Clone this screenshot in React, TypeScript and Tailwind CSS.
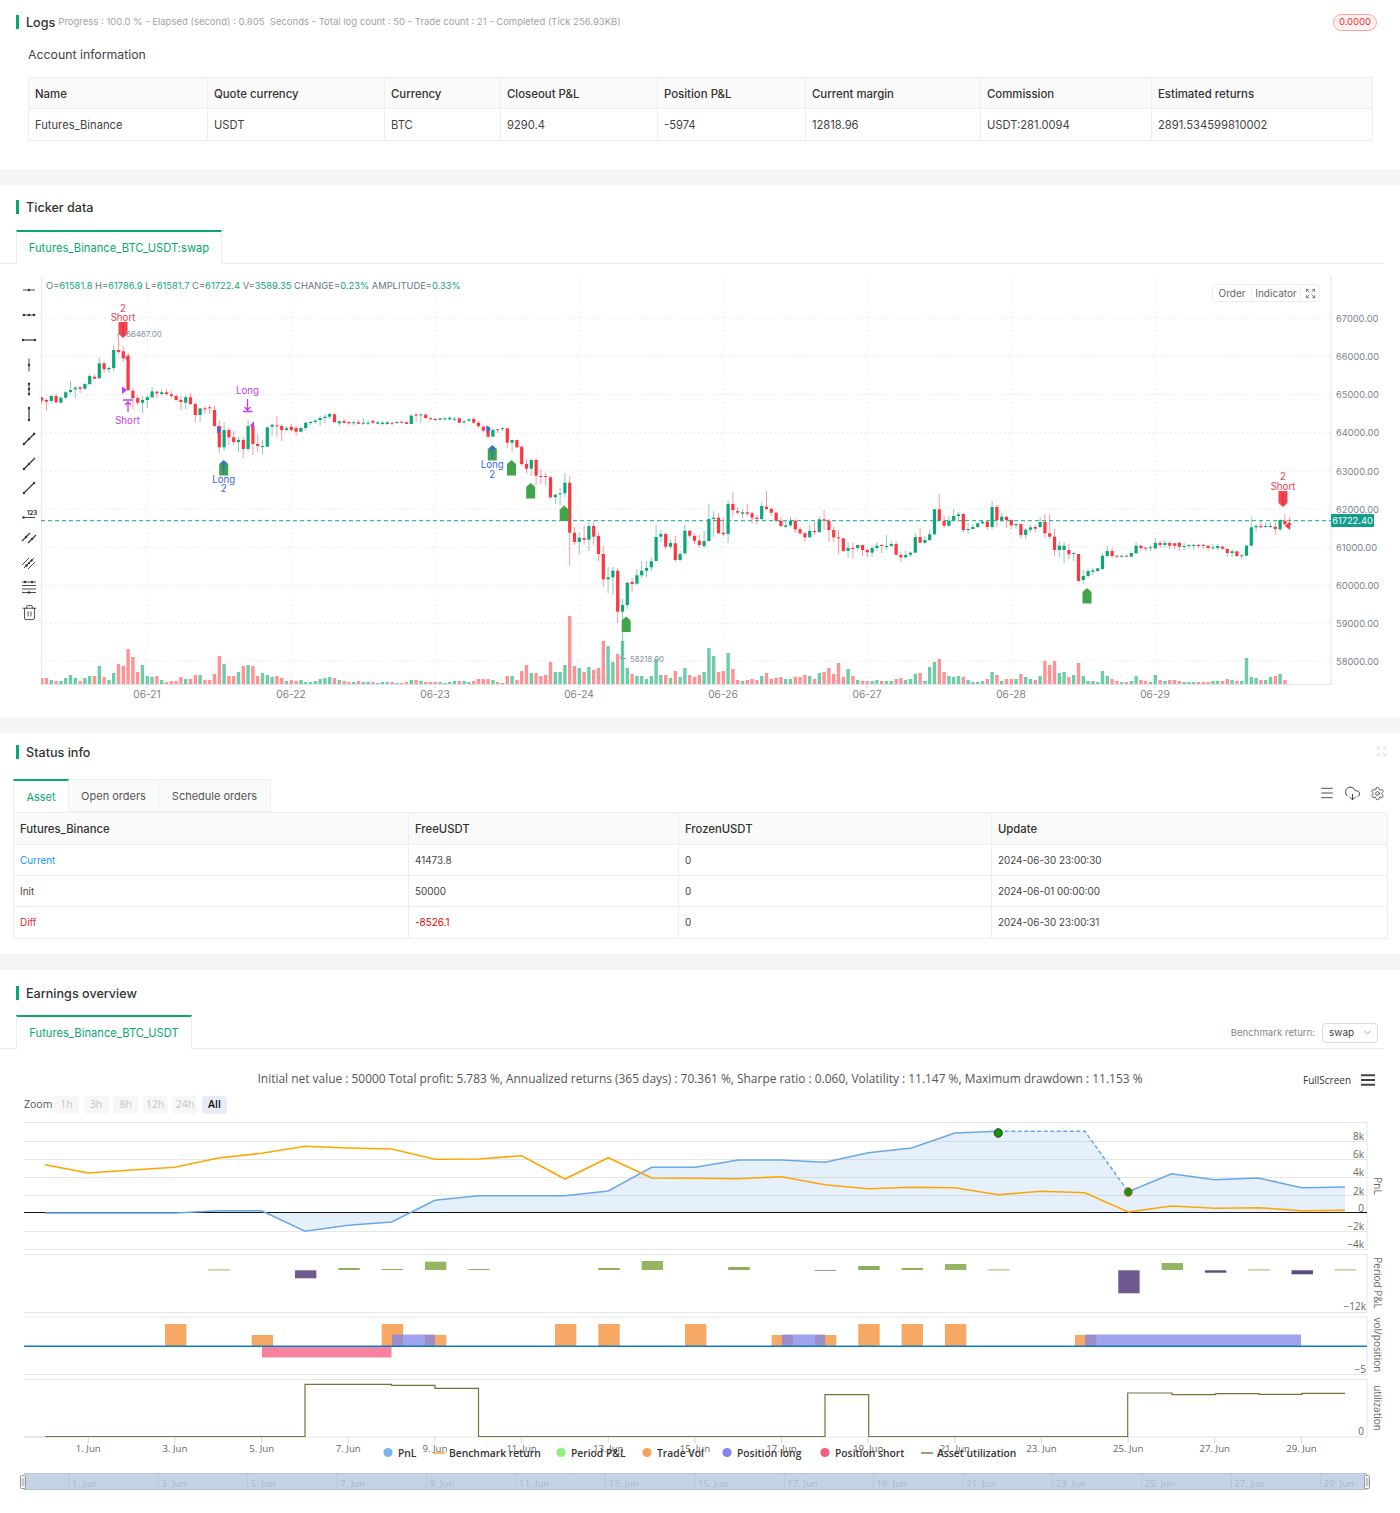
import { CloudDownload, ChevronDown, Expand, Menu, Settings, Trash2 } from "lucide-react";

type Candle = { top: number; bot: number; hi: number; lo: number; up: boolean };

const g = (top: number, bot: number, hi: number, lo: number): Candle => ({ top, bot, hi, lo, up: true });
const r = (top: number, bot: number, hi: number, lo: number): Candle => ({ top, bot, hi, lo, up: false });

// page-pixel coordinates read off the chart, one candle every 4.8px
const candles: Candle[] = [
  r(397.3,400.7,397,404), r(400,401.7,398,410.7), g(396,401,395,403), r(396,402.3,394,404), g(397.7,402.7,396,404), g(392.3,397.7,391,399), g(390,392,381,394), g(387.7,389.3,386,398),
  r(387.3,388.7,386,393), g(384,388.7,383,390), g(376,384,374,385), r(376.7,378.7,375,379), g(363.3,378.3,358,379), r(363.3,369.3,361,373), g(368,369.3,366,373), g(350,368,345,371),
  r(350,352,337,354), r(351.3,358.3,346,362), r(356,390,353,391), r(390.7,398,388,409), r(398,402.7,395,405), g(400,402.7,396,413), g(397.3,400,395,408), g(391.3,397.3,387,398),
  r(391.7,393.3,391,398), g(392.3,394,389,395), r(392.3,394,389,396), r(394.3,396,391,398), r(396,400,394,401), r(400,402,396,410), g(397.3,402.7,395,409), r(397.3,404,393,405),
  r(404,415,402,422), g(408.3,415,408,422), r(408.3,409,406,414), r(407.3,408.3,405,414), r(410,426,406,427), r(426,447.3,420,453), g(430,447.3,422,451), r(430,437.3,427,445),
  r(437.3,442,431,445), g(440,442,437,452), r(440,449,437,458), g(426,449,420,451), r(426,444,422,455), r(444,446,435,452), g(446,446.7,440,454), g(427.3,446.7,427,447),
  g(424.7,426.7,424,436), r(425.3,426,416,437), r(426,430,424,441), g(428.3,430,426,431), r(426.7,430,424,432), r(428,431.7,426,436), g(428,431.7,427,432), g(422.7,428,422,431),
  g(422,422.7,421,425), g(420.7,422,419,424), g(418,420,416,426), g(416.7,418,414,423), g(414,416.7,413,419), r(414.3,422.3,413,423), g(421.3,423.3,420,426), r(421,422.7,419,424),
  r(422,423.3,421,425), g(422.3,423.3,421,425), r(422.3,423.7,420,424), g(422.7,423.7,418,425), g(422.7,423.7,420,425), r(421,422.7,420,424), g(422.3,423.7,421,424), g(422.7,424,421,425),
  g(422.3,424,421,425), r(422.7,423.7,422,425), g(422,423,421,424), r(421.7,422.7,421,424), r(422.3,424,421,424), g(415.7,424,414,424), r(414.7,415.3,413,422), g(414.3,415.3,414,423),
  r(414.7,418,413,419), r(418.3,419.3,417,420), r(419,420,418,421), g(418.3,419.7,418,420), g(418.3,419.3,417,421), g(417.7,419.3,416,420), g(418.7,419.7,417,421), r(418.3,422.7,417,423),
  g(421.3,422.3,420,425), g(419.3,420.7,418,422), r(419,422.7,417,424), r(422.7,426,421,428), r(426.7,430.7,425,432), r(426.7,436.7,427,438), g(430,436.7,428,437), r(429.3,430,429,433),
  g(428.3,429.3,427,431), r(428.3,442.7,428,448), g(440,442.7,440,452), r(440,447.3,440,448), r(446.7,464,446,466), r(464,468.7,459,473), g(460,468.7,459,476), r(460,475.7,458,485),
  r(476,476.7,469,484), r(476,477,473,485), r(477.3,497.3,476,499), g(494.7,497.3,494,504), g(493.3,494,488,505), g(482.7,493.3,473,497), r(482.7,532.7,476,566), r(532.7,542,527,545),
  g(537.7,542,532,554), r(538,539.7,526,545), g(526,539.7,522,551), r(526,536.7,521,545), r(536,554,532,561), r(554,579.3,546,587), g(577.3,579.3,567,593), g(570.7,577.3,567,595),
  r(570.7,611.7,568,623), g(605,611.7,599,656), g(582.7,605,582,609), r(582,584,578,592), g(575.3,583.7,569,585), g(570.7,575.3,561,578), g(568,570.7,561,577), g(561.3,567.3,557,571),
  g(537,561,525,561), g(534,536.7,530,542), r(534,546.7,532,550), g(543,546.7,540,549), r(543.3,560,536,562), g(554,560,551,561), g(530.7,553.3,525,554), r(530.7,535.7,530,538),
  r(536,540.7,533,544), r(540.7,545,535,547), g(541,546,531,548), g(519,541,504,541), g(517.7,519,511,537), r(517.7,533.3,513,534), r(532.7,534.3,517,536), g(504,534,500,543),
  r(504,510,492,517), r(511,512.7,507,514), g(512.3,513.7,509,518), r(512.3,513.7,504,516), r(513.3,517.7,512,523), r(517.7,519,515,524), g(506,519,502,520), r(506.7,509,491,510),
  r(509,512.7,507,516), r(512.7,520.7,512,522), r(520.7,526,517,527), g(525.3,526.7,521,528), g(520.7,525.3,517,527), r(520.7,529.3,519,533), r(529.3,533.3,527,535), r(533.3,537.3,532,542),
  g(531,537.3,525,538), r(531,531.7,522,535), g(519.3,532,517,533), r(519.3,520.7,510,530), r(520.7,530,519,542), r(530,537.3,527,542), r(537.3,538.3,530,554), r(538.3,551,538,552),
  g(548,551,542,558), r(548,548.7,542,559), g(545,548,545,551), r(545,550,545,556), r(550,552.3,548,557), g(548,552.7,546,557), g(545.7,548,542,551), r(545,545.7,544,553),
  g(546,546.7,535,550), g(544,546,541,547), r(544,554.7,541,555), r(555,557.3,552,562), g(555,557.3,551,558), g(552.7,554.7,552,557), g(537,552.7,533,553), r(537,542.7,528,543),
  g(540,542.7,536,544), g(534.3,540,530,541), g(509.3,534.3,509,535), r(509.3,520.7,494,521), r(520.7,525.7,515,528), g(520.7,525.7,516,527), g(516,520.7,509,521), g(514.3,516,512,521),
  r(514,530,513,532), g(529,530,523,534), g(527,529,524,529), g(523.3,527,523,528), g(521.7,523.3,520,524), r(521.7,527,520,530), g(507,527,501,529), r(507,520.3,505,527),
  g(516.7,520.3,513,522), r(516.7,520,516,528), r(520,525.3,519,529), g(524,525.3,523,529), r(524,535,524,539), g(529.7,535,528,539), g(527.3,529.7,525,532), r(527,528.7,525,532),
  g(522,527,517,528), r(522,533.3,514,538), r(533.3,536.7,514,539), r(536.7,550,529,556), g(545.7,550,541,557), g(545.7,550,542,563), r(550,554.3,544,559), g(553,554,552,561),
  r(554,581,554,582), g(576,580,570,584), g(571,576,569,578), g(570.3,571.7,568,575), g(568.3,571,568,572), g(555.7,569,554,570), g(551,556,546,557), r(551,556,548,558),
  r(555.7,556.7,555,558), g(555.7,556.7,555,558), r(555.7,556.7,555,557), g(553,556.7,553,557), g(545.7,553.3,542,554), r(545.7,548,545,551), r(547.7,548.7,547,551), g(547.3,548.3,545,551),
  g(543,548.3,538,550), r(543,545,541,548), g(543,545,540,548), r(543,545.7,541,549), r(543.3,545.7,543,549), r(542.7,546.7,542,551), g(546,546.7,543,550), g(545,546,544,548),
  g(545,545.7,544,550), r(545,546,544,548), r(545,546,544,549), r(545.7,548,545,551), g(547.3,548.3,544,550), g(546,548,544,550), r(546.7,548.7,546,550), r(549,553,548,557),
  g(551.3,553,549,557), r(551.3,556,551,557), g(555.3,556,554,559), g(545.7,555.7,545,556), g(527.3,545.7,517,546), g(526,527.3,524,532), r(526,527.3,520,528), g(526,527,522,528),
  g(526,527,522,528), r(526.7,529,522,535), g(520,529.3,519,531), r(520.7,524.3,514,527), r(523.3,525,517,529),
];

const volumes = [
  6,6,4,3,3,6,9,6,3,6,8,8,18,7,4,11,20,18,35,27,12,19,8,7,8,4,2,3,3,7,5,5,9,9,4,4,10,28,20,8,8,12,18,19,18,8,11,9,7,8,6,3,4,3,4,2,2,3,5,6,7,6,
  4,3,2,2,3,2,2,2,1,2,2,2,1,1,2,4,4,3,2,2,2,2,1,2,3,3,3,2,3,5,5,5,4,2,1,8,8,4,13,19,11,11,8,9,22,12,12,19,68,18,16,12,17,14,16,43,38,22,30,43,16,10,8,8,5,8,25,9,9,6,13,7,16,9,7,9,
  12,36,28,12,13,31,15,4,3,4,5,4,8,11,5,6,7,5,5,7,7,9,8,5,11,12,16,10,21,7,15,8,4,3,3,3,4,3,3,3,5,6,4,5,10,11,3,17,22,25,12,8,7,8,7,4,2,2,3,5,12,9,3,5,5,5,
  10,7,5,4,8,23,19,23,11,12,7,9,21,8,3,3,2,13,8,5,3,2,2,3,8,4,3,2,9,4,3,4,4,3,2,2,2,2,2,2,3,3,3,5,4,3,3,26,7,6,4,4,7,8,10,4,
];

const X0 = 41.7;
const cx = (i: number) => X0 + 4.8 * i;

const GREEN = "#0ca678";
const RED = "#ff3540";
const PURPLE = "#c23df2";
const BLUE = "#3a66f0";

const priceLevels = [67000, 66000, 65000, 64000, 63000, 62000, 61000, 60000, 59000, 58000];
const priceY = [318, 356.2, 394.6, 432.8, 471, 509, 547.2, 585.4, 623, 661];
const dayTicks = [
  ["06-21", 147], ["06-22", 291], ["06-23", 435], ["06-24", 579],
  ["06-26", 723], ["06-27", 867], ["06-28", 1011], ["06-29", 1155],
] as const;

// long entry marker, a green house with a flat foot
function House({ x, y }: { x: number; y: number }) {
  return <polygon points={`${x},${y} ${x + 4.5},${y + 4} ${x + 4.5},${y + 15.5} ${x - 4.5},${y + 15.5} ${x - 4.5},${y + 4}`} fill="#3fa548" />;
}

function ChartText({ x, y, fill, children }: { x: number; y: number; fill: string; children: React.ReactNode }) {
  return <text x={x} y={y} fill={fill} fontSize="9.7" textAnchor="middle">{children}</text>;
}

function TickerChart() {
  return (
    <svg viewBox="41 264 1359 453" className="w-[1359px] h-[453px] block">
      {priceY.map((y) => <line key={y} x1="41" x2="1331" y1={y} y2={y} stroke="#dfe2e6" strokeDasharray="1.5 3" />)}
      {dayTicks.map(([d, x]) => <line key={d} x1={x} x2={x} y1="276" y2="684" stroke="#e3e5e9" strokeDasharray="1.5 3" />)}
      <line x1="41.5" x2="41.5" y1="276" y2="684" stroke="#e9ebee" />
      <line x1="1331" x2="1331" y1="276" y2="685" stroke="#dfe2e6" />
      <line x1="41" x2="1331" y1="684.5" y2="684.5" stroke="#dfe2e6" />

      {volumes.map((h, i) => candles[i] && (
        <rect key={i} x={cx(i) - 1.7} y={684 - h} width="3.4" height={h} fill={candles[i].up ? "#6fcca9" : "#ff9294"} />
      ))}

      {candles.map((c, i) => (
        <g key={i}>
          <line x1={cx(i)} x2={cx(i)} y1={c.hi} y2={c.lo} stroke={c.up ? GREEN : RED} strokeOpacity="0.5" />
          <rect x={cx(i) - 1.6} y={c.top} width="3.2" height={Math.max(c.bot - c.top, 1)} fill={c.up ? GREEN : RED} />
        </g>
      ))}

      <line x1="41" x2="1331" y1="520.7" y2="520.7" stroke="#10a897" strokeDasharray="4 3" />

      <text x="46" y="289" fontSize="9.35" fill="#6b7683">
        O=<tspan fill={GREEN}>61581.8</tspan> H=<tspan fill={GREEN}>61786.9</tspan> L=<tspan fill={GREEN}>61581.7</tspan> C=<tspan fill={GREEN}>61722.4</tspan> V=<tspan fill={GREEN}>3589.35</tspan> CHANGE=<tspan fill={GREEN}>0.23%</tspan> AMPLITUDE=<tspan fill={GREEN}>0.33%</tspan>
      </text>

      {/* markers, left to right */}
      <ChartText x={123} y={312} fill="#f0404f">2</ChartText>
      <ChartText x={123} y={321} fill="#f0404f">Short</ChartText>
      <polygon points="118.5,322 127.5,322 127.5,334 123,338 118.5,334" fill="#f8424e" />
      <line x1="123" x2="123" y1="324" y2="336" stroke="#c9353f" />
      <path d="M118 337v-3h3" fill="none" stroke="#8a929c" />
      <text x="126" y="337" fontSize="8" fill="#8a929c">66467.00</text>
      <polygon points="129,354.5 129,362 125,358" fill={RED} />
      <polygon points="122,386.5 122,394 127,390" fill={PURPLE} />
      <path d="M123 400h10M128 402v10M125 405l3-3 3 3" fill="none" stroke={PURPLE} strokeWidth="1.3" />
      <ChartText x={127.5} y={424} fill={PURPLE}>Short</ChartText>

      <ChartText x={247.5} y={394} fill={PURPLE}>Long</ChartText>
      <path d="M243 411.5h9.5M247.5 399v11M244.5 407l3 3 3-3" fill="none" stroke={PURPLE} strokeWidth="1.3" />
      <polygon points="254,421.5 254,429.5 250,425.5" fill={PURPLE} />

      <polygon points="217,426 217,433.5 221.5,430" fill={BLUE} />
      <House x={223.7} y={460} />
      <path d="M223.7 461v13M221 464.5l2.7-3 2.7 3" fill="none" stroke={BLUE} strokeWidth="1.4" />
      <ChartText x={223.7} y={483} fill={BLUE}>Long</ChartText>
      <ChartText x={223.7} y={492} fill={BLUE}>2</ChartText>

      <polygon points="486.5,425 486.5,433 491,429" fill={BLUE} />
      <House x={492.3} y={445} />
      <path d="M492.3 446v13M489.6 449.5l2.7-3 2.7 3" fill="none" stroke={BLUE} strokeWidth="1.4" />
      <ChartText x={492.3} y={468} fill={BLUE}>Long</ChartText>
      <ChartText x={492.3} y={477.5} fill={BLUE}>2</ChartText>

      <House x={511.5} y={460} />
      <House x={530.7} y={483} />
      <House x={564.2} y={505.5} />
      <House x={626.2} y={616.5} />
      <House x={1087} y={588} />

      <path d="M621 659v-3M621 658.5h5" fill="none" stroke="#8a929c" />
      <text x="630" y="662" fontSize="7.8" fill="#8a929c">58218.00</text>

      <ChartText x={1283} y={480} fill="#f0404f">2</ChartText>
      <ChartText x={1283} y={489.5} fill="#f0404f">Short</ChartText>
      <polygon points="1278.5,491 1287.5,491 1287.5,503 1283,507 1278.5,503" fill="#f8424e" />
      <line x1="1283" x2="1283" y1="493" y2="505" stroke="#c9353f" />
      <polygon points="1290,521.5 1290,530 1285,526" fill={RED} />

      {priceLevels.map((p, i) => (
        <text key={p} x="1336" y={priceY[i] + 3.5} fontSize="9.3" fill="#7b838c">{p}.00</text>
      ))}
      {dayTicks.map(([d, x]) => (
        <g key={d}>
          <line x1={x} x2={x} y1="684" y2="688" stroke="#d5d8dc" />
          <text x={x} y="698" fontSize="10.2" fill="#7b838c" textAnchor="middle">{d}</text>
        </g>
      ))}
      <rect x="1331" y="514" width="43" height="13" rx="1" fill="#0f9d8d" />
      <text x="1352.5" y="524" fontSize="9.3" fill="#fff" textAnchor="middle">61722.40</text>
    </svg>
  );
}

// drawing tools down the left of the ticker chart
function Tool({ children }: { children: React.ReactNode }) {
  return (
    <div className="h-[24.75px] flex items-center justify-center">
      <svg viewBox="0 0 16 16" className="w-4 h-4" fill="none" stroke="#333" strokeWidth="0.9">{children}</svg>
    </div>
  );
}

function Dot({ x, y }: { x: number; y: number }) {
  return <circle cx={x} cy={y} r="1.2" fill="#333" stroke="none" />;
}

function Toolbar() {
  return (
    <div className="w-[41px] pt-[14px] pl-[17px] shrink-0">
      <Tool><path d="M2 8h12" /><Dot x={8} y={8} /></Tool>
      <Tool><path d="M1.5 8h13" /><Dot x={3} y={8} /><Dot x={8} y={8} /><Dot x={13} y={8} /></Tool>
      <Tool><path d="M1.5 8h13" strokeWidth="1.2" /><Dot x={2} y={8} /><Dot x={14} y={8} /></Tool>
      <Tool><path d="M8 1.5v13" /><Dot x={8} y={8} /></Tool>
      <Tool><path d="M8 1.5v13" /><Dot x={8} y={3} /><Dot x={8} y={8} /><Dot x={8} y={13} /></Tool>
      <Tool><path d="M8 1.5v13" strokeWidth="1.2" /><Dot x={8} y={2} /><Dot x={8} y={14} /></Tool>
      <Tool><path d="M2 14L14 2" strokeWidth="1.2" /><Dot x={3} y={13} /><Dot x={8} y={8} /><Dot x={13} y={3} /></Tool>
      <Tool><path d="M2.5 13.5L14 2" strokeWidth="1.2" /><Dot x={3} y={13} /><Dot x={8} y={8} /></Tool>
      <Tool><path d="M3 13L13 3" strokeWidth="1.1" /><Dot x={3} y={13} /><Dot x={13} y={3} /></Tool>
      <Tool>
        <path d="M2 12.5h12" /><Dot x={2.5} y={12.5} />
        <text x="6" y="10" fontSize="6" fontWeight="700" fill="#333" stroke="none">123</text>
      </Tool>
      <Tool><path d="M1 11L9 3M7 13L15 5" strokeWidth="1.1" /><Dot x={5} y={7} /><Dot x={11} y={9} /></Tool>
      <Tool><path d="M1 10l7-7M3 13l10-10M7 14l7-7" strokeWidth="0.9" /><Dot x={8} y={8} /><Dot x={5.5} y={10.5} /><Dot x={10.5} y={5.5} /></Tool>
      <Tool><path d="M1 3h14M1 6.5h14M1 10h14M1 13.5h14" /><Dot x={4} y={3} /><Dot x={11} y={3} /><Dot x={8} y={13.5} /></Tool>
      <div className="h-[24.75px] flex items-center justify-center">
        <Trash2 size={17} strokeWidth={1.2} className="text-[#333]" />
      </div>
    </div>
  );
}

const pnlBlue = [1213, 1213, 1213, 1213, 1210.7, 1210.7, 1231.3, 1225.3, 1222, 1200.3, 1195.7, 1195.7, 1195.7, 1191, 1167.3, 1167.3, 1160, 1160, 1162.3, 1152.7, 1148, 1133, 1131.3, 1131.3, 1131.3, 1191.7, 1173.7, 1179.7, 1178, 1187.7, 1187];
const benchOrange = [1164.7, 1173, 1170, 1167.3, 1158, 1153.3, 1146.3, 1148, 1149, 1159.3, 1159, 1155.7, 1179, 1157.7, 1178, 1178.3, 1178.7, 1176.7, 1184.7, 1188.7, 1187.3, 1187.7, 1194.7, 1191.3, 1192.7, 1212, 1206, 1208.3, 1207.7, 1210.7, 1210.3];
const px = (k: number) => 45 + 43.33 * k;
const pts = (ys: number[], from = 0) => ys.map((y, i) => `${px(i + from)},${y}`).join(" ");

// period p&l bars: day index, top, bottom, colour
const periodBars: [number, number, number, string][] = [
  [4, 1269, 1270.7, "#c3d3a0"], [6, 1270.3, 1278.3, "#6f5a8f"], [7, 1268, 1270, "#8fae5b"], [8, 1269, 1270, "#8fae5b"],
  [9, 1261.7, 1270, "#96b563"], [10, 1269, 1270, "#8fae5b"], [13, 1268, 1270, "#8fae5b"], [14, 1261, 1270, "#96b563"],
  [16, 1267, 1270, "#8fae5b"], [18, 1270.3, 1271, "#7c6a9b"], [19, 1266, 1270, "#8fae5b"], [20, 1268, 1270, "#8fae5b"],
  [21, 1264, 1270, "#96b563"], [22, 1269, 1270.7, "#c3d3a0"], [25, 1270.3, 1293.3, "#6f5a8f"], [26, 1263, 1270, "#96b563"],
  [27, 1270.3, 1272.7, "#5f4a80"], [28, 1269, 1270.7, "#c3d3a0"], [29, 1270.3, 1274.3, "#5f4a80"], [30, 1269, 1270.7, "#c3d3a0"],
];
const tradeBars: [number, number][] = [
  [3, 1324], [5, 1335], [8, 1324], [9, 1335], [12, 1324], [13, 1324], [15, 1324], [17, 1335], [18, 1335], [19, 1324], [20, 1324], [21, 1324], [24, 1335],
];
const longSpans = [[392, 435], [782, 825], [1085, 1301]];

const xDays = ["1", "3", "5", "7", "9", "11", "13", "15", "17", "19", "21", "23", "25", "27", "29"];
const legend = [
  { x: 398, mark: "#7cb5ec", label: "PnL" },
  { x: 449, line: "#f0a030", label: "Benchmark return" },
  { x: 571, mark: "#90ed7d", label: "Period P&L" },
  { x: 657, mark: "#f7a35c", label: "Trade Vol" },
  { x: 737, mark: "#8085e9", label: "Position long" },
  { x: 835, mark: "#f15c80", label: "Position short" },
  { x: 937, line: "#7d6f3a", label: "Asset utilization" },
];

function EarningsChart() {
  const stepLine = "M45 1436.5H305V1384.3H391.5V1385.3H435V1388.3H478.5V1436.5H825V1394.7H868.7V1436.5H1127.7V1393H1172V1394.7H1215.6V1393.7H1259V1394.3H1302V1393.3H1345";
  return (
    <svg viewBox="0 1113 1400 400" className="w-[1400px] h-[400px] block">
      {[1122.5, 1141.5, 1159.5, 1177.5, 1195.5, 1231.5, 1249.5, 1254.5, 1312.5, 1317, 1374.5, 1379.5, 1437].map((y) => (
        <line key={y} x1="24" x2="1367" y1={y} y2={y} stroke="#e6e6e6" />
      ))}
      {[[1122, 1250], [1254, 1313], [1317, 1375], [1379, 1437]].map(([a, b]) => (
        <line key={a} x1="1367" x2="1367" y1={a} y2={b} stroke="#dfe5f2" />
      ))}

      <polygon points={`${pts(pnlBlue)} ${px(30)},1213 ${px(0)},1213`} fill="#7cb5ec" fillOpacity="0.2" />
      <line x1="24" x2="1367" y1="1212.5" y2="1212.5" stroke="#111" />
      <polyline points={pts(pnlBlue.slice(0, 23))} fill="none" stroke="#69a8e8" strokeWidth="1.5" />
      <polyline points={pts(pnlBlue.slice(22, 26), 22)} fill="none" stroke="#69a8e8" strokeWidth="1.5" strokeDasharray="4 2.5" />
      <polyline points={pts(pnlBlue.slice(25), 25)} fill="none" stroke="#69a8e8" strokeWidth="1.5" />
      <polyline points={pts(benchOrange)} fill="none" stroke="#ffa500" strokeWidth="1.6" />
      <ellipse cx={px(22)} cy="1133" rx="4" ry="4.3" fill="#0a9a0a" stroke="#333" />
      <ellipse cx={px(25)} cy="1192" rx="4" ry="4.3" fill="#0a9a0a" stroke="#ef4444" />

      {[["8k", 1139.5], ["6k", 1158], ["4k", 1175.5], ["2k", 1194.5], ["0", 1211.5], ["−2k", 1230], ["−4k", 1247.5]].map(([t, y]) => (
        <text key={t} x="1364" y={y} fontSize="10" fill="#666" textAnchor="end">{t}</text>
      ))}

      {periodBars.map(([k, a, b, c]) => (
        <rect key={k} x={px(k) - 10} y={a} width="21.4" height={b - a} fill={c} />
      ))}
      <text x="1366" y="1310" fontSize="10" fill="#666" textAnchor="end">−12k</text>

      {tradeBars.map(([k, y]) => (
        <rect key={k} x={px(k) - 10} y={y} width="21.4" height={1347 - y} fill="#f7a35c" fillOpacity="0.95" />
      ))}
      <rect x="262" y="1347" width="129.5" height="10.5" fill="#f6839e" />
      {longSpans.map(([a, b]) => (
        <rect key={a} x={a} y="1334.5" width={b - a} height="12" fill="#8085e9" fillOpacity="0.75" />
      ))}
      <line x1="24" x2="1367" y1="1346.2" y2="1346.2" stroke="#0a7fc4" strokeWidth="1.6" />
      <text x="1366" y="1373" fontSize="10" fill="#666" textAnchor="end">−5</text>

      <line x1="24" x2="45" y1="1437" y2="1437" stroke="#dfe5f2" strokeWidth="1.6" />
      <path d={stepLine} fill="none" stroke="#7d6f3a" strokeWidth="1.2" />
      <text x="1364" y="1435" fontSize="10" fill="#666" textAnchor="end">0</text>

      {[["PnL", 1186], ["Period P&L", 1283], ["vol/position", 1345], ["utilization", 1408]].map(([t, y]) => (
        <text key={t as string} transform={`translate(1374 ${y}) rotate(90)`} fontSize="10" fill="#666" textAnchor="middle">{t}</text>
      ))}

      {xDays.map((d, i) => {
        const x = 88.3 + 86.65 * i;
        return (
          <g key={d}>
            <line x1={x} x2={x} y1="1437" y2="1443" stroke="#ccd6eb" />
            <text x={x} y="1452" fontSize="9.6" fill="#666" textAnchor="middle">{d}. Jun</text>
          </g>
        );
      })}

      {legend.map((l) => (
        <g key={l.label}>
          {l.mark && <circle cx={l.x - 10} cy="1452.5" r="4.6" fill={l.mark} />}
          {l.line && <line x1={l.x - 16} x2={l.x - 4} y1="1453" y2="1453" stroke={l.line} strokeWidth="1.4" />}
          <text x={l.x} y="1456.5" fontSize="10.3" fontWeight="600" fill="#333">{l.label}</text>
        </g>
      ))}

      <rect x="24" y="1473.5" width="1343" height="16" fill="#c5d3e6" />
      <line x1="24" x2="1367" y1="1473.5" y2="1473.5" stroke="#b8c6da" />
      <line x1="24" x2="1367" y1="1489.5" y2="1489.5" stroke="#b3c2d8" />
      {xDays.map((d, i) => {
        const x = 69 + 89.4 * i;
        return (
          <g key={d}>
            <line x1={x} x2={x} y1="1474" y2="1489" stroke="#b8c6da" />
            <text x={x + 3} y="1486.5" fontSize="9.6" fill="#a9b8cc">{d}. Jun</text>
          </g>
        );
      })}
      <rect x="20.5" y="1475.5" width="5" height="13" rx="1" fill="#f2f2f2" stroke="#999" />
      <rect x="1364.5" y="1475.5" width="5" height="13" rx="1" fill="#f2f2f2" stroke="#999" />
      <path d="M22.5 1478v8M23.8 1478v8M1366.5 1478v8M1367.8 1478v8" stroke="#999" strokeWidth="0.6" />
    </svg>
  );
}

function SectionTitle({ children }: { children: React.ReactNode }) {
  return (
    <div className="ml-4 h-[14px] border-l-[3px] border-[#0aa871] pl-[7px] pt-[2px] flex items-center text-[12.6px] font-medium text-[#333] leading-none">
      {children}
    </div>
  );
}

function Tab({ label, width }: { label: string; width: string }) {
  return (
    <div className={`${width} ml-4 h-[34px] -mb-px border-t-2 border-x border-t-[#0aa871] border-x-[#eeeeee] bg-white flex items-center justify-center text-[11.2px] text-[#0aa871]`}>
      {label}
    </div>
  );
}

const accountCols = ["Name", "Quote currency", "Currency", "Closeout P&L", "Position P&L", "Current margin", "Commission", "Estimated returns"];
const accountRow = ["Futures_Binance", "USDT", "BTC", "9290.4", "-5974", "12818.96", "USDT:281.0094", "2891.534599810002"];
const statusCols = ["Futures_Binance", "FreeUSDT", "FrozenUSDT", "Update"];

export default function App() {
  return (
    <div className="w-[1400px] h-[1513px] overflow-hidden bg-[#f4f5f7] text-[#444] [font-family:Inter,sans-serif]">
      <section className="h-[169px] bg-white pt-[15px] relative">
        <div className="flex items-center h-[14px]">
          <SectionTitle>Logs</SectionTitle>
          <span className="ml-[3px] text-[9.5px] text-[#a3a3a3] whitespace-nowrap">Progress : 100.0 % - Elapsed (second) : 0.805 &nbsp;Seconds - Total log count : 50 - Trade count : 21 - Completed (Tick 256.93KB)</span>
        </div>
        <span className="absolute left-[1333px] top-[14px] w-[44px] h-[17px] rounded-full border border-[#ffa39e] bg-[#fff1f0] text-[#e5343d] text-[9.5px] flex items-center justify-center">0.0000</span>
        <div className="ml-7 mt-[15px] h-5 pt-px leading-5 text-[12.3px] text-[#444]">Account information</div>
        <table className="ml-7 mt-[13px] w-[1344px] table-fixed border-collapse text-[11.2px]">
          <colgroup>
            <col className="w-[179px]" /><col className="w-[177px]" /><col className="w-[116px]" /><col className="w-[157px]" />
            <col className="w-[148px]" /><col className="w-[175px]" /><col className="w-[171px]" /><col className="w-[221px]" />
          </colgroup>
          <thead>
            <tr className="h-[31px] bg-[#fafafa]">
              {accountCols.map((c) => <th key={c} className="border border-[#eeeeee] px-[6px] pt-[3px] text-left font-medium text-[11.4px] text-[#333]">{c}</th>)}
            </tr>
          </thead>
          <tbody>
            <tr className="h-[32px]">
              {accountRow.map((c) => <td key={c} className="border border-[#eeeeee] px-[6px] pt-px">{c}</td>)}
            </tr>
          </tbody>
        </table>
      </section>

      <section className="h-[532px] mt-4 bg-white pt-[15px]">
        <SectionTitle>Ticker data</SectionTitle>
        <div className="mt-4 mr-4 border-b border-[#eeeeee] flex">
          <Tab label="Futures_Binance_BTC_USDT:swap" width="w-[206px]" />
        </div>
        <div className="flex">
          <Toolbar />
          <div className="relative">
            <TickerChart />
            <div className="absolute left-[1171px] top-[20px] w-[108px] h-[18px] rounded-sm border border-[#eeeeee] bg-white flex items-center text-[10px] text-[#666]">
              <span className="w-[38px] text-center">Order</span>
              <span className="flex-1 text-center border-x border-[#eeeeee]">Indicator</span>
              <span className="w-[18px] flex justify-center"><Expand size={11} strokeWidth={1.5} className="text-[#555]" /></span>
            </div>
          </div>
        </div>
      </section>

      <section className="h-[221px] mt-4 bg-white pt-[12px] relative">
        <SectionTitle>Status info</SectionTitle>
        <Expand size={11} strokeWidth={1.2} className="absolute left-[1376px] top-[13px] text-[#cfcfcf]" />
        <div className="mt-5 ml-[13px] mr-[15px] flex items-center justify-between">
          <div className="flex text-[11px] h-[33px]">
            <div className="w-[56px] pt-[2px] border-t-2 border-x border-t-[#0aa871] border-x-[#eeeeee] text-[#0aa871] flex items-center justify-center">Asset</div>
            <div className="w-[90px] pt-[2px] border border-l-0 border-[#eeeeee] bg-[#fafafa] text-[#555] flex items-center justify-center">Open orders</div>
            <div className="w-[112px] pt-[2px] border border-l-0 border-[#eeeeee] bg-[#fafafa] text-[#555] flex items-center justify-center">Schedule orders</div>
          </div>
          <div className="flex items-center gap-[9px] text-[#444] -mt-[5px]">
            <Menu size={16} strokeWidth={1.4} />
            <CloudDownload size={17} strokeWidth={1.4} />
            <Settings size={15} strokeWidth={1.4} />
          </div>
        </div>
        <table className="ml-[13px] w-[1374px] table-fixed border-collapse text-[9.9px]">
          <colgroup>
            <col className="w-[395px]" /><col className="w-[270px]" /><col className="w-[313px]" /><col className="w-[396px]" />
          </colgroup>
          <thead>
            <tr className="h-[32px] bg-[#fafafa] text-[11.3px]">
              {statusCols.map((c) => <th key={c} className="border border-[#eeeeee] px-[6px] pt-[2px] text-left font-medium text-[#333]">{c}</th>)}
            </tr>
          </thead>
          <tbody>
            <tr className="h-[31px]">
              <td className="border border-[#eeeeee] px-[6px] text-[#1890ff]">Current</td>
              <td className="border border-[#eeeeee] px-[6px]">41473.8</td>
              <td className="border border-[#eeeeee] px-[6px]">0</td>
              <td className="border border-[#eeeeee] px-[6px]">2024-06-30 23:00:30</td>
            </tr>
            <tr className="h-[31px]">
              <td className="border border-[#eeeeee] px-[6px]">Init</td>
              <td className="border border-[#eeeeee] px-[6px]">50000</td>
              <td className="border border-[#eeeeee] px-[6px]">0</td>
              <td className="border border-[#eeeeee] px-[6px]">2024-06-01 00:00:00</td>
            </tr>
            <tr className="h-[32px]">
              <td className="border border-[#eeeeee] px-[6px] text-[#d9302c]">Diff</td>
              <td className="border border-[#eeeeee] px-[6px] text-[#e60000]">-8526.1</td>
              <td className="border border-[#eeeeee] px-[6px]">0</td>
              <td className="border border-[#eeeeee] px-[6px]">2024-06-30 23:00:31</td>
            </tr>
          </tbody>
        </table>
      </section>

      <section className="h-[543px] mt-4 bg-white pt-4 relative">
        <SectionTitle>Earnings overview</SectionTitle>
        <div className="mt-[15px] mr-4 border-b border-[#eeeeee] flex items-center justify-between">
          <Tab label="Futures_Binance_BTC_USDT" width="w-[176px]" />
          <div className="flex items-center mr-[6px] mt-[2px]">
            <span className="text-[9.6px] text-[#888] mr-[7px] pt-[2px]">Benchmark return:</span>
            <div className="w-[56px] h-[20px] rounded-sm border border-[#dddddd] flex items-center justify-between pl-[6px] pr-1 text-[10px] text-[#444]">
              swap <ChevronDown size={11} className="text-[#999]" />
            </div>
          </div>
        </div>
        <div className="relative mt-5 h-5 text-center leading-5 text-[11.95px] text-[#555] [font-family:'Open_Sans',sans-serif]">
          Initial net value : 50000 Total profit: 5.783 %, Annualized returns (365 days) : 70.361 %, Sharpe ratio : 0.060, Volatility : 11.147 %, Maximum drawdown : 11.153 %
          <div className="absolute left-[1303px] top-[1px] flex items-center text-[10px] text-[#333]">
            <span>FullScreen</span>
            <svg viewBox="0 0 14 12" className="w-[14px] h-3 ml-[10px]"><path d="M0 1.2h14M0 6h14M0 10.8h14" stroke="#444" strokeWidth="2" /></svg>
          </div>
        </div>
        <div className="mt-[7px] ml-6 h-[18px] flex items-center text-[10.5px] text-[#555] [font-family:'Open_Sans',sans-serif]">
          <span className="w-[30px]">Zoom</span>
          {["1h", "3h", "8h", "12h", "24h"].map((z) => (
            <span key={z} className="w-[25px] h-[18px] mr-[4.6px] rounded-sm bg-[#f7f7f7] text-[#c4c4c4] flex items-center justify-center">{z}</span>
          ))}
          <span className="w-[25px] h-[18px] rounded-sm bg-[#e6ebf5] text-[#111] font-semibold flex items-center justify-center">All</span>
        </div>
        <div className="-mt-px [font-family:'Open_Sans',sans-serif]">
          <EarningsChart />
        </div>
      </section>
    </div>
  );
}
